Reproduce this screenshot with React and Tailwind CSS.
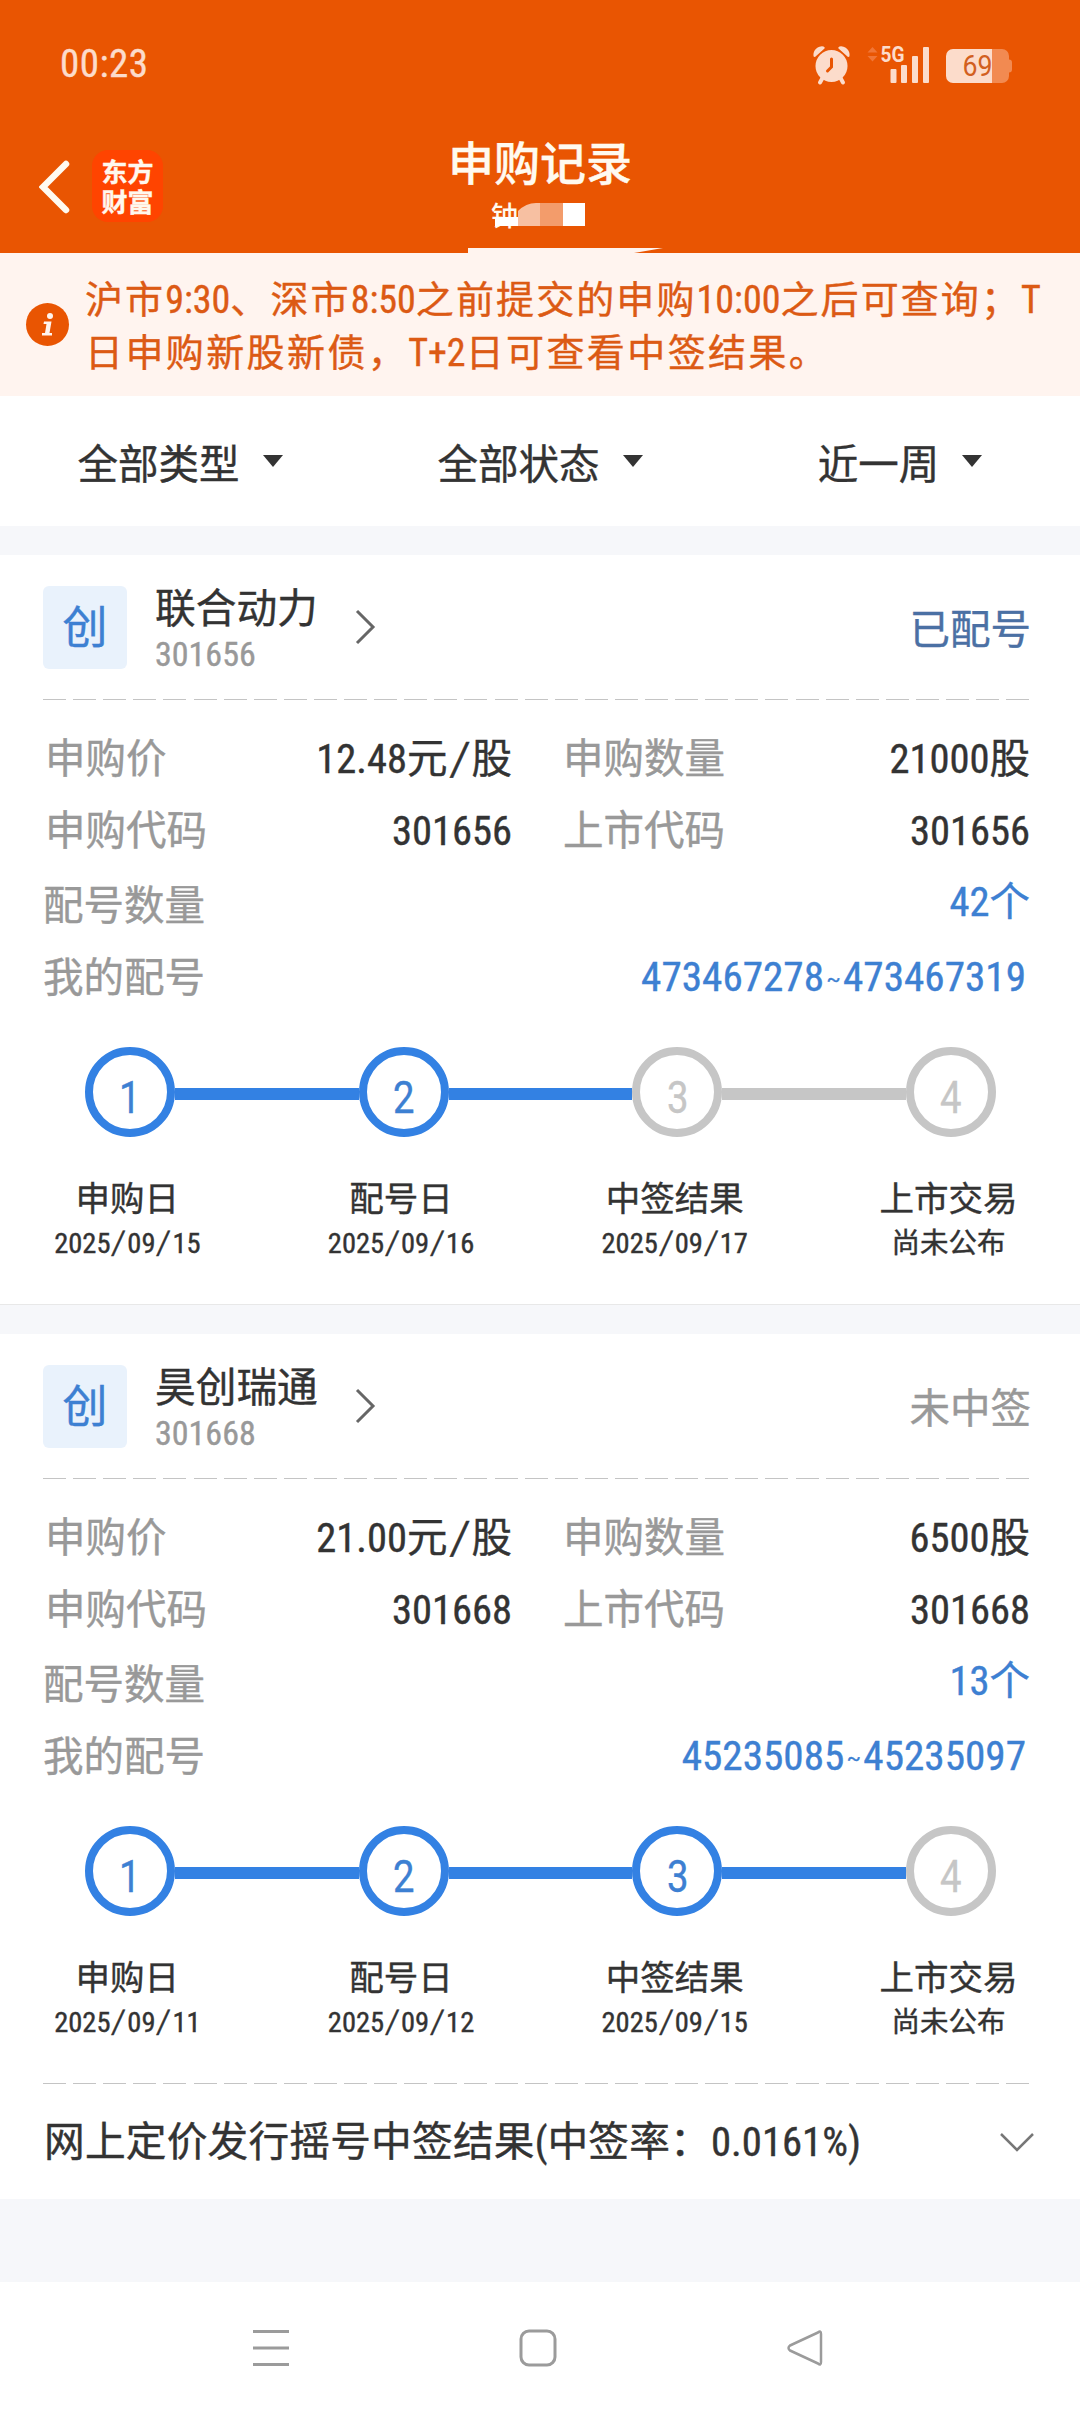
const HAN = "font-['Noto_Sans_CJK_SC',sans-serif] [-webkit-text-stroke:0.4px_currentColor]";
const LABEL_CLS = "pl-[2px] text-[#999]";
const DASH_CLS = "mr-2 h-px bg-[repeating-linear-gradient(to_right,#c4c4c4_0_23px,transparent_23px_30.1px)]";

const NOTICE = [
  "沪市9:30、深市8:50之前提交的申购10:00之后可查询；T",
  "日申购新股新债，T+2日可查看中签结果。",
];

const FILTERS = ["全部类型", "全部状态", "近一周"];

const RECORDS = [
  {
    name: "联合动力", code: "301656", status: "已配号", statusCls: "text-[#4b70a4]",
    price: "12.48元/股", amount: "21000股", count: "42个", range: "473467278~473467319",
    done: 2,
    steps: [
      ["申购日", "2025/09/15"],
      ["配号日", "2025/09/16"],
      ["中签结果", "2025/09/17"],
      ["上市交易", "尚未公布"],
    ],
  },
  {
    name: "昊创瑞通", code: "301668", status: "未中签", statusCls: "text-[#999]",
    price: "21.00元/股", amount: "6500股", count: "13个", range: "45235085~45235097",
    done: 3,
    result: "网上定价发行摇号中签结果(中签率：0.0161%)",
    steps: [
      ["申购日", "2025/09/11"],
      ["配号日", "2025/09/12"],
      ["中签结果", "2025/09/15"],
      ["上市交易", "尚未公布"],
    ],
  },
];

// Latin runs are set narrower than the Chinese text around them
function Mixed({ text }) {
  return text.split(/([/~]|[\x20-\x2e\x30-\x7d]+)/).filter(Boolean).map((part, i) => {
    if (part === "/") return <span key={i} className="inline-block scale-y-115 -skew-x-8 px-[0.09em] font-[Roboto,sans-serif]">/</span>;
    if (part === "~") return <span key={i} className="px-[0.12em] align-[0.2em] font-[Roboto,sans-serif] text-[0.5em]">~</span>;
    if (/^[\x20-\x7e]+$/.test(part)) {
      return <span key={i} className="font-[Roboto,sans-serif] font-stretch-semi-condensed tracking-[0] [font-kerning:none]">{part}</span>;
    }
    return <span key={i}>{part}</span>;
  });
}

function StatusBar() {
  return (
    <div className="flex h-[129px] items-center justify-between pl-[60px] pr-[68px] text-[#fcdccb]">
      <span className="font-[Roboto,sans-serif] text-[39px] font-stretch-semi-condensed tracking-[0.012em]">00:23</span>
      <svg className="h-[40px] w-[200px] overflow-visible" viewBox="812 44 200 40" fill="currentColor" strokeWidth="0">
        <circle cx="831.5" cy="65" r="16" />
        <path d="M813.5 55a8.500 8.500 0 0 1 10-9.500q2 1 1 2l-9.500 8.500q-1.500 0-1.500-1zM849.500 55a8.500 8.500 0 0 0-10-9.500q-2 1-1 2l9.500 8.500q1.500 0 1.500-1z" />
        <path d="M822.500 77l-2.500 4.500M840.500 77l2.500 4.500" stroke="currentColor" strokeWidth="4" strokeLinecap="round" />
        <path d="M831.500 58v8l-4 4" fill="none" stroke="#e95502" strokeWidth="3" strokeLinecap="round" />
        <path d="M867.500 51.500l5-5.500 5 5.500zM867.500 55l5 5.500 5-5.500z" fill="#f17637" />
        <text x="880.500" y="61.300" fontFamily="Roboto" fontWeight="700" fontSize="22.500" textLength="24" lengthAdjust="spacingAndGlyphs">5G</text>
        <rect x="890.500" y="68" width="6" height="14" rx="1" />
        <rect x="901" y="64" width="6" height="18" rx="1" />
        <rect x="912" y="55" width="6" height="27" rx="1" />
        <rect x="923" y="46" width="6" height="36" rx="1" />
        <path d="M953 48h39v34h-39a7 7 0 0 1-7-7V55a7 7 0 0 1 7-7z" />
        <path d="M992 48h10a7 7 0 0 1 7 7v3.500q3 0 3 3v7q0 3-3 3V75a7 7 0 0 1-7 7h-10z" fill="#f28a51" />
        <text x="962.500" y="75" fontFamily="Roboto" fontSize="29.500" fill="#d2601f" textLength="30" lengthAdjust="spacingAndGlyphs">69</text>
      </svg>
    </div>
  );
}

function TitleBar() {
  return (
    <div className="relative flex h-[124px] items-start pl-[39px] pt-[21px]">
      <svg className="mt-[10px] h-[54px] w-[32px]" viewBox="0 0 32 54" fill="none" stroke="#fffaf0" strokeWidth="6.500" strokeLinecap="round">
        <path d="M27 4L4 27l23 23" strokeLinejoin="miter" />
      </svg>
      <div className="ml-[21px] flex h-[72px] w-[71px] flex-col items-center justify-center rounded-[16px] bg-[#ff4400] text-[26px] font-bold leading-[30px] text-[#fff8ee]">
        <span>东方</span>
        <span>财富</span>
      </div>
      <div className="absolute inset-x-0 top-[-3px] flex flex-col items-center">
        <h1 className="text-[46px] font-medium leading-[68px] text-[#fffaf0]">申购记录</h1>
        <svg className="mr-[4px] mt-[8px] h-[26px] w-[98px] overflow-visible" viewBox="489 202 98 26" strokeWidth="0">
          <text x="491" y="226" fontFamily="Noto Sans CJK SC" fontWeight="500" fontSize="27" fill="#fffaf0">钟</text>
          <rect x="495" y="217" width="23" height="9" fill="#fff" />
          <path d="M518 211q8-8 18-8h4v23h-22z" fill="#f7c0a2" />
          <rect x="540" y="203" width="23" height="23" fill="#f39c6b" />
          <rect x="563" y="203" width="22" height="23" fill="#fff" />
        </svg>
      </div>
      <svg className="absolute bottom-0 left-[468px] h-[5px] w-[195px]" viewBox="0 0 195 5">
        <path d="M0 0h195l-29 5H0z" fill="#fff4ef" />
      </svg>
    </div>
  );
}

function Notice() {
  return (
    <div className="flex h-[143px] items-center bg-[#fff4ef] pl-[26px] text-[#dc5a14]">
      <div className="flex h-[43px] w-[43px] items-center justify-center rounded-full bg-[#e95502]">
        <svg className="h-[26px] w-[16px]" viewBox="0 0 16 26" fill="#fff4ef">
          <circle cx="10" cy="4" r="3" />
          <path d="M4 9.500h7.500L9.500 21H12v2.500H2V21h3l1.500-9H3.500z" />
        </svg>
      </div>
      <div className="ml-[16px] whitespace-nowrap text-[38px] leading-[49px]">
        <p className="tracking-[2.100px]"><Mixed text={NOTICE[0]} /></p>
        <p className="tracking-[2.400px]"><Mixed text={NOTICE[1]} /></p>
      </div>
    </div>
  );
}

function Steps({ steps, done }) {
  return (
    <div className="-ml-[50px] -mr-[51px] mt-[37px] flex">
      {steps.map(([title, date], i) => (
        <div key={title} className="flex w-[273.700px] shrink-0 flex-col items-center">
          <div className="flex w-full items-center">
            <div className={`mt-[3px] h-[12px] flex-1 ${i === 0 ? "bg-transparent" : i <= done ? "bg-[#3381e3]" : "bg-[#c6c6c6]"}`} />
            <div className={`flex h-[90px] w-[90px] items-center justify-center rounded-full border-[8.500px] pt-[10px] font-[Roboto,sans-serif] text-[45px] leading-none ${i < done ? "border-[#3381e3] text-[#3d80d2]" : "border-[#c6c6c6] text-[#c6c6c6]"}`}>
              <span className="scale-x-85">{i + 1}</span>
            </div>
            <div className={`mt-[3px] h-[12px] flex-1 ${i === 3 ? "bg-transparent" : i + 1 <= done ? "bg-[#3381e3]" : "bg-[#c6c6c6]"}`} />
          </div>
          <div className="mt-[35px] pr-[5px] text-[34.500px] leading-[48px]">{title}</div>
          <div className="h-[42px] pr-[5px] text-[28.500px] leading-[42px]"><Mixed text={date} /></div>
        </div>
      ))}
    </div>
  );
}

function RecordCard({ record }) {
  return (
    <section className="bg-white pl-[43px] pr-[43px] pt-[30px]">
      <div className="flex h-[84px] items-center">
        <div className="flex h-[83px] w-[84px] items-center justify-center rounded-[6px] bg-[#e9f2fc] pb-[4px] text-[45px] text-[#3d80d2]">创</div>
        <div className="ml-[28px] mt-[6px]">
          <div className="text-[40.700px] leading-[46px]">{record.name}</div>
          <div className="text-[34px] leading-[46px] text-[#999]"><Mixed text={record.code} /></div>
        </div>
        <svg className="ml-[37px] h-[36px] w-[22px]" viewBox="0 0 22 36" fill="none" stroke="#666" strokeWidth="3">
          <path d="M2 2l16 16L2 34" />
        </svg>
        <span className={`ml-auto mr-[6px] text-[40.500px] ${record.statusCls}`}>{record.status}</span>
      </div>

      <div className={`mt-[30px] ${DASH_CLS}`} />

      {/* Order details */}
      <div className="mr-[7px] mt-[22px] text-[40.500px]">
        <div className="grid h-[144px] grid-cols-[469px_469px] grid-rows-2 items-center justify-between">
          <div className="flex justify-between"><span className={LABEL_CLS}>申购价</span><Value text={record.price} /></div>
          <div className="flex justify-between"><span className={LABEL_CLS}>申购数量</span><Value text={record.amount} /></div>
          <div className="flex justify-between"><span className={LABEL_CLS}>申购代码</span><Value text={record.code} /></div>
          <div className="flex justify-between"><span className={LABEL_CLS}>上市代码</span><Value text={record.code} /></div>
        </div>
        <div className="flex h-[75px] items-center justify-between">
          <span className="text-[#999]">配号数量</span>
          <span className="mb-[5px] text-[#3d80d2]"><Mixed text={record.count} /></span>
        </div>
        <div className="flex h-[69px] items-center justify-between">
          <span className="text-[#999]">我的配号</span>
          <span className="mr-[4px] text-[41.200px] text-[#3d80d2]"><Mixed text={record.range} /></span>
        </div>
      </div>

      <Steps steps={record.steps} done={record.done} />

      {record.result ? (
        <>
          <div className={`mt-[42px] ${DASH_CLS}`} />
          <div className="flex h-[115px] items-center justify-between text-[40.700px]">
            <span className="pb-[2px] pl-[1px] tracking-[0.200px]"><Mixed text={record.result} /></span>
            <svg className="mr-[3px] h-[20px] w-[34px]" viewBox="0 0 34 20" fill="none" stroke="#777" strokeWidth="2.500">
              <path d="M1 2l16 16L33 2" />
            </svg>
          </div>
        </>
      ) : (
        <div className="-mx-[43px] mt-[42px] h-px bg-[#e8e8e8]" />
      )}
    </section>
  );
}

function Value({ text }) {
  return <span><Mixed text={text} /></span>;
}

export default function App() {
  return (
    <div className={`flex h-[2414px] w-[1080px] flex-col overflow-hidden bg-[#f6f7fa] text-[#333] ${HAN}`}>
      <header className="h-[253px] shrink-0 bg-[#e95502]">
        <StatusBar />
        <TitleBar />
      </header>
      <Notice />

      {/* Filters */}
      <div className="flex h-[130px] bg-white pt-[2px]">
        {FILTERS.map((f) => (
          <button key={f} type="button" className="flex flex-1 items-center justify-center gap-[23px] text-[40.500px]">
            {f}
            <svg className="mb-[2px] h-[12px] w-[20px]" viewBox="0 0 20 12"><path d="M0 0h20L10 12z" fill="#333" strokeWidth="0" /></svg>
          </button>
        ))}
      </div>

      <main className="mt-[29px] flex flex-col gap-[29px]">
        {RECORDS.map((r) => <RecordCard key={r.code} record={r} />)}
      </main>

      {/* System navigation */}
      <nav className="mt-auto flex h-[132px] items-center justify-between bg-white pl-[252px] pr-[256px]">
        <svg className="h-[38px] w-[38px]" viewBox="0 0 38 38" stroke="#9b9b9b" strokeWidth="3"><path d="M1 2.500h36M1 19h36M1 35.500h36" /></svg>
        <svg className="h-[38px] w-[38px]" viewBox="0 0 38 38" fill="none" stroke="#9b9b9b" strokeWidth="3"><rect x="2" y="2" width="34" height="34" rx="8" /></svg>
        <svg className="h-[38px] w-[38px]" viewBox="0 0 38 38" fill="none" stroke="#9b9b9b" strokeWidth="2.500" strokeLinejoin="round"><path d="M32 3.500Q35 1 35 5v28q0 4-3 1.500L4 21.500q-3-2.500 0-5z" /></svg>
      </nav>
    </div>
  );
}
